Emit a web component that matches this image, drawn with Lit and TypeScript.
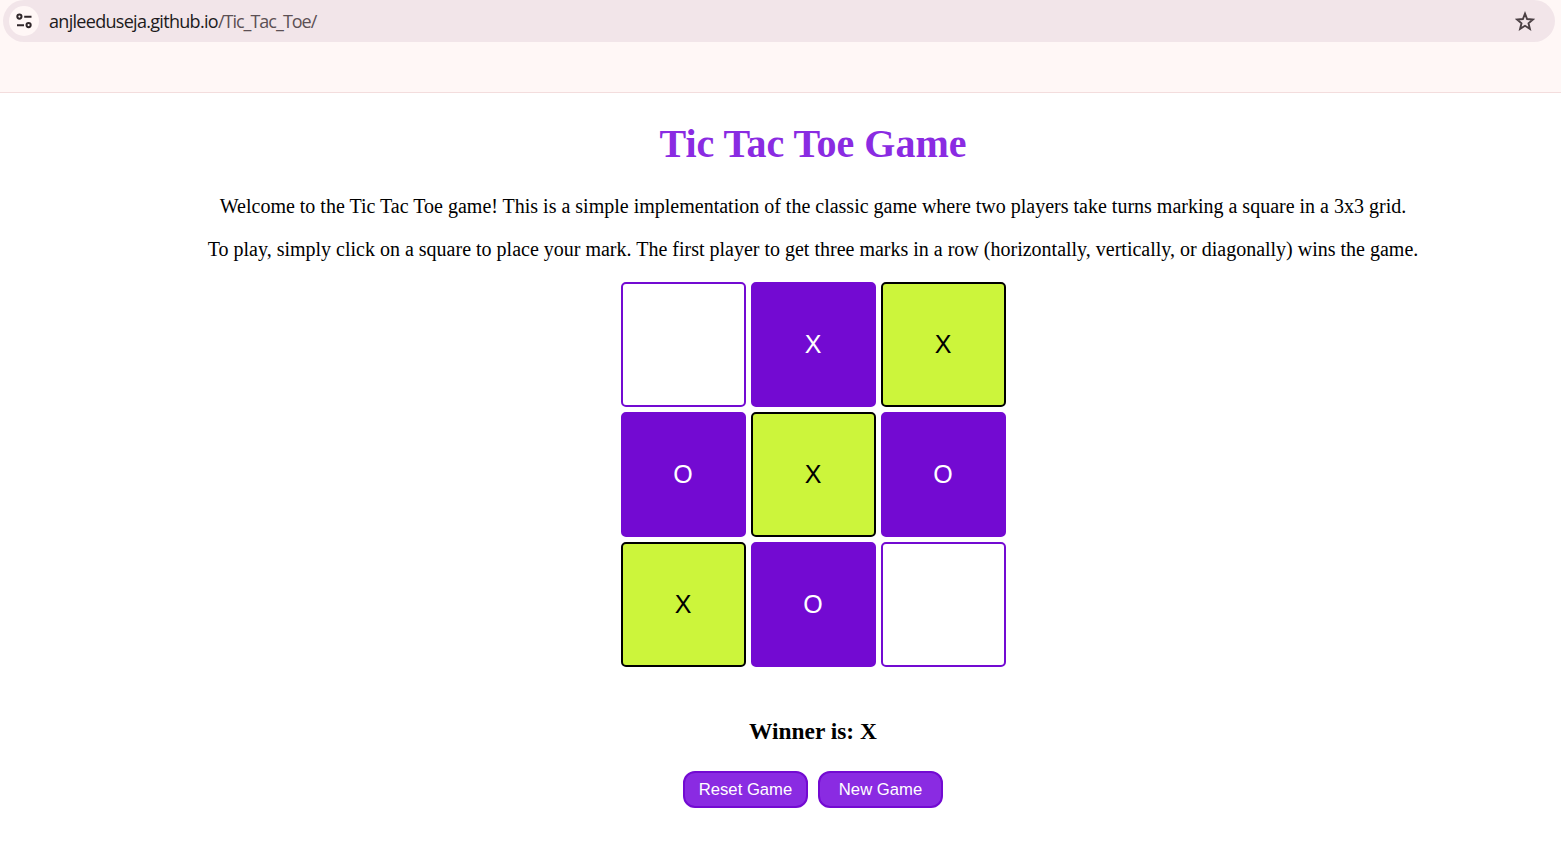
import { LitElement, html, css } from "lit";
import { customElement, state } from "lit/decorators.js";
import { classMap } from "lit/directives/class-map.js";

@customElement("address-bar")
class AddressBar extends LitElement {
  static styles = css`
    :host { display: block; height: 92px; background: #fff7f6; border-bottom: 1px solid #f3dddd; }
    .wrap { padding: 0 6px 0 3px; }
    .pill {
      display: flex; align-items: center; height: 42px; box-sizing: border-box;
      padding: 0 20px 0 6px; border-radius: 21px; background: #f2e5e9;
    }
    .info { display: grid; place-items: center; width: 30px; height: 30px; border-radius: 50%; background: #fff7f6; }
    .url { flex: 1; margin-left: 10px; font: 18px/24px "Open Sans", "Noto Sans", sans-serif; color: #5c5054; }
    .url span { display: inline-block; white-space: nowrap; letter-spacing: -1px; }
    .url .host { color: #201a1c; letter-spacing: -0.7px; }
    svg { display: block; }
  `;
  render() {
    return html`<div class="wrap"><div class="pill">
      <div class="info"><svg width="16" height="16" viewBox="0 0 16 16" fill="none" stroke="#30272a" stroke-width="2">
        <circle cx="3.4" cy="3.6" r="2.1"></circle><path d="M8.2 3.8h7.3M1 12.2h7"></path><circle cx="12.6" cy="12.1" r="2.1"></circle>
      </svg></div>
      <div class="url"><span class="host">anjleeduseja.github.io</span><span>/Tic_Tac_Toe/</span></div>
      <svg width="20" height="20" viewBox="0 0 20 20" fill="none" stroke="#4b4044" stroke-width="1.9">
        <path d="M10 2.7l2.1 5.3 5.9.45-4.5 3.8 1.4 5.6L10 14.8l-4.9 3.05 1.4-5.6-4.5-3.8 5.9-.45z"></path>
      </svg>
    </div></div>`;
  }
}

@customElement("app-root")
class AppRoot extends LitElement {
  static styles = css`
    :host { display: block; height: 846px; overflow: hidden; background: #fff; }
    main {
      display: flex; flex-direction: column; align-items: center; width: 1626px;
      font-family: "Liberation Serif", "Times New Roman", serif; color: #000;
    }
    h1 { margin: 28px 0 0; font-size: 40px; line-height: 46px; color: #8a2be2; }
    p { margin: 0; font-size: 20px; line-height: 23px; white-space: nowrap; }
    .intro { margin-top: 28px; }
    .rules { margin-top: 20px; }
    .board { display: grid; grid-template-columns: repeat(3, 125px); grid-auto-rows: 125px; gap: 5px; margin-top: 21px; }
    button { margin: 0; padding: 0; box-sizing: border-box; font-family: "Liberation Sans", Arial, sans-serif; }
    .cell { border: 2px solid #730ad2; border-radius: 5px; background: #fff; color: #fff; font-size: 25px; }
    .filled { background: #730ad2; }
    .win { background: #ccf53b; color: #000; border-color: #000; }
    h2 { margin: 51px 0 0; font-size: 23.4px; line-height: 27px; min-height: 27px; }
    .actions { display: flex; gap: 10px; margin-top: 26px; }
    .action { width: 125px; height: 37px; border: 2px solid #730ad2; border-radius: 12px; background: #8a2be2; color: #fff; font-size: 16.67px; }
  `;
  @state() private cells = ["", "X", "X", "O", "X", "O", "X", "O", ""];

  private get line(): number[] {
    const lines = [[0, 1, 2], [3, 4, 5], [6, 7, 8], [0, 3, 6], [1, 4, 7], [2, 5, 8], [0, 4, 8], [2, 4, 6]];
    return lines.find(([a, b, c]) => this.cells[a] && this.cells[a] === this.cells[b] && this.cells[a] === this.cells[c]) ?? [];
  }
  private mark(i: number) {
    if (this.cells[i] || this.line.length) return;
    const next = this.cells.filter(Boolean).length % 2 ? "O" : "X";
    this.cells = this.cells.map((c, j) => (j === i ? next : c));
  }
  private clear() { this.cells = Array(9).fill(""); }

  render() {
    const line = this.line;
    return html`
      <address-bar></address-bar>
      <main>
        <h1>Tic Tac Toe Game</h1>
        <p class="intro">Welcome to the Tic Tac Toe game! This is a simple implementation of the classic game where two players take turns marking a square in a 3x3 grid.</p>
        <p class="rules">To play, simply click on a square to place your mark. The first player to get three marks in a row (horizontally, vertically, or diagonally) wins the game.</p>
        <div class="board">
          ${this.cells.map((c, i) => html`<button class=${classMap({ cell: true, filled: !!c, win: line.includes(i) })} @click=${() => this.mark(i)}>${c}</button>`)}
        </div>
        <h2>${line.length ? `Winner is: ${this.cells[line[0]]}` : ""}</h2>
        <div class="actions">
          <button class="action" @click=${this.clear}>Reset Game</button>
          <button class="action" @click=${this.clear}>New Game</button>
        </div>
      </main>`;
  }
}
